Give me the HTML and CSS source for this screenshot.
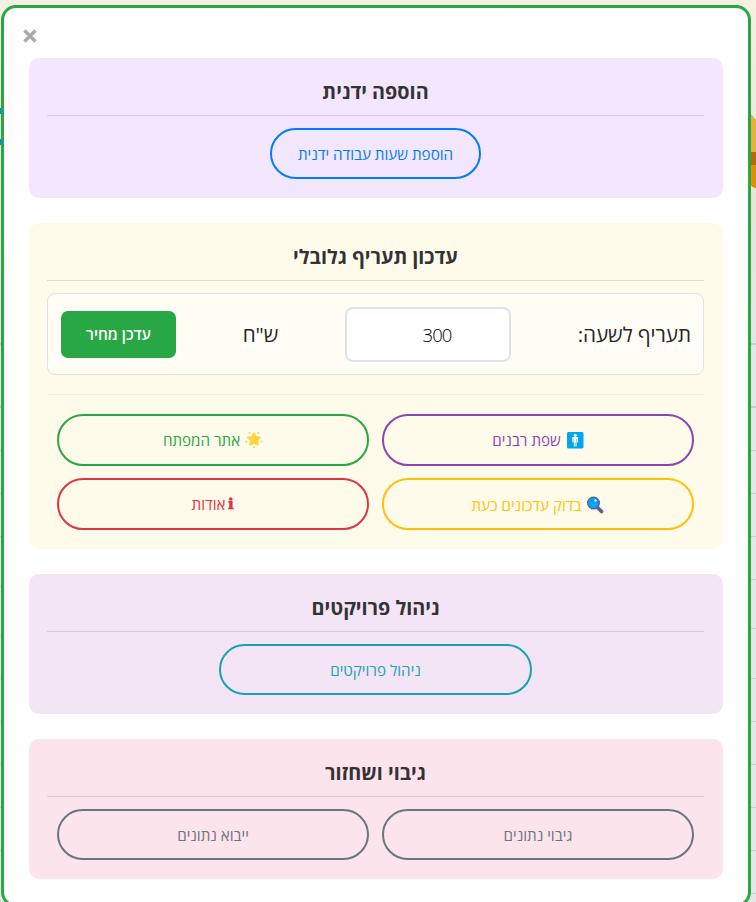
FILE: index.html
```
<!DOCTYPE html>
<html lang="he" dir="rtl">
<head>
    <meta charset="UTF-8">
    <meta name="viewport" content="width=device-width, initial-scale=1.0">
    <title>הגדרות</title>
    <link rel="stylesheet" href="styles.css">
</head>
<body>
    <svg class="backdrop" width="756" height="902" viewBox="0 0 756 902">
        <g fill="#007bff">
            <rect x="0" y="108" width="1" height="6"/>
            <rect x="0" y="139" width="1" height="6"/>
        </g>
        <path d="M750 113l6 7v34l-6-2z" fill="#e8b13c"/>
        <rect x="750" y="152" width="6" height="13" fill="#b96b0b"/>
        <path d="M750 165h6v23q-4 0-6-4z" fill="#df8e08"/>
        <path d="M751 344h5M751 407h5M0 344h1M0 407h1" stroke="#cacaca" stroke-width="2"/>
        <path d="M751 450.500h5M751 493.500h5M751 536.500h5M751 579.500h5M751 628.500h5M751 678.500h5M751 721.500h5M751 764.500h5M751 807.500h5M751 850.500h5M751 893.500h5M0 450.500h1M0 493.500h1M0 536.500h1M0 586.500h1M0 635.500h1M0 678.500h1M0 721.500h1M0 764.500h1M0 807.500h1M0 850.500h1M0 900.500h1" stroke="#cacaca"/>
    </svg>

    <div class="modal-content">
        <button class="close" aria-label="סגור">
            <svg width="14" height="14" viewBox="0 0 14 14"><path d="M1.500 1.500l11 11M12.500 1.500l-11 11" stroke="#aaa" stroke-width="3.400"/></svg>
        </button>

        <section class="section manual">
            <h3>הוספה ידנית</h3>
            <div class="single">
                <button class="btn btn-blue">הוספת שעות עבודה ידנית</button>
            </div>
        </section>

        <section class="section rate">
            <h3>עדכון תעריף גלובלי</h3>
            <div class="rate-box">
                <label for="hourlyRate">תעריף לשעה:</label>
                <input type="text" id="hourlyRate" value="300">
                <span class="currency">ש"ח</span>
                <button class="update-btn">עדכן מחיר</button>
            </div>
            <div class="btn-grid links">
                <button class="btn btn-purple">
                    <svg class="icon" width="18" height="18" viewBox="0 0 18 18">
                        <rect x="1" y="1" width="16.500" height="16.500" rx="1.500" fill="#00a4ef"/>
                        <circle cx="9.200" cy="4.200" r="1.500" fill="#fff"/>
                        <path d="M6.300 6h5.800v5.200H11V7.900h-.4v7.600H9.500v-4h-.6v4H7.800V7.900h-.4v3.300H6.300z" fill="#fff"/>
                    </svg>
                    <span>שפת רבנים</span>
                </button>
                <button class="btn btn-green">
                    <svg class="icon" width="18" height="18" viewBox="0 0 18 18">
                        <path d="M9 2.500l1.800 3.500 4 .5-2.900 2.800.8 4.200L9 11.600l-3.700 1.900.8-4.200-2.900-2.800 4-.5z" fill="#ffd43b" stroke="#ffd43b" stroke-width="2" stroke-linejoin="round"/>
                        <g fill="#ffc83d">
                            <circle cx="4.500" cy="1.800" r=".9"/><circle cx="13.500" cy="1.800" r=".9"/>
                            <circle cx="1.300" cy="10.600" r=".9"/><circle cx="16.700" cy="10.600" r=".9"/>
                            <circle cx="9" cy="16.300" r=".9"/>
                        </g>
                    </svg>
                    <span>אתר המפתח</span>
                </button>
                <button class="btn btn-yellow">
                    <svg class="icon icon-search" width="18" height="18" viewBox="0 0 18 18">
                        <path d="M11.500 11.500l4 4" stroke="#635994" stroke-width="3.600" stroke-linecap="round"/>
                        <circle cx="7.500" cy="7" r="5.900" fill="#00a6ed" stroke="#635994" stroke-width="1.200"/>
                        <circle cx="9.500" cy="4.500" r="1.200" fill="#d3f2ff"/>
                    </svg>
                    <span>בדוק עדכונים כעת</span>
                </button>
                <button class="btn btn-red"><b class="info">ℹ</b><span>אודות</span></button>
            </div>
        </section>

        <section class="section projects">
            <h3>ניהול פרויקטים</h3>
            <div class="single">
                <button class="btn btn-teal">ניהול פרויקטים</button>
            </div>
        </section>

        <section class="section backup">
            <h3>גיבוי ושחזור</h3>
            <div class="btn-grid">
                <button class="btn btn-gray">גיבוי נתונים</button>
                <button class="btn btn-gray">ייבוא נתונים</button>
            </div>
        </section>
    </div>
</body>
</html>
```
FILE: styles.css
```
* {
    box-sizing: border-box;
}

body {
    margin: 0;
    height: 902px;
    overflow: hidden;
    background: linear-gradient(#f5f0e0, #e9e5da 200px, #e6e6e6 350px);
    font-family: "Open Sans", "Noto Sans", sans-serif;
    color: #212529;
}

button,
input {
    font-family: inherit;
}

.backdrop {
    position: absolute;
    top: 0;
    left: 0;
}

.modal-content {
    position: relative;
    width: 750px;
    height: 902px;
    margin: 5px 5px 0 1px;
    padding: 21px 25px 25px;
    background-color: #fff;
    border: 3px solid #28a745;
    border-radius: 15px;
}

.close {
    display: block;
    width: 14px;
    height: 14px;
    margin: 0 auto 15px -6px;
    padding: 0;
    border: none;
    background: none;
    cursor: pointer;
}

.close svg {
    display: block;
}

.section {
    margin-bottom: 25px;
    padding: 18px 19px 19px 18px;
    border-radius: 10px;
}

.manual { background-color: #f3e6ff; }
.rate { background-color: #fffbea; }
.projects { background-color: #f3e5f5; }
.backup { background-color: #fce4ec; }

h3 {
    height: 40px;
    margin: 0 0 12px;
    border-bottom: 1px solid rgba(0, 0, 0, 0.12);
    color: #333;
    font-size: 19.8px;
    font-weight: 700;
    line-height: 31px;
    text-align: center;
    white-space: nowrap;
}

.single {
    display: flex;
    justify-content: center;
}

.btn {
    display: flex;
    align-items: center;
    justify-content: center;
    height: 51px;
    padding: 0 10px;
    border: 2px solid;
    border-radius: 26px;
    background: transparent;
    font-size: 15.2px;
    font-weight: 450;
    white-space: nowrap;
    cursor: pointer;
}

.btn-blue { width: 211px; color: #007bff; }
.btn-teal { width: 313px; color: #17a2b8; }
.btn-purple { color: #8e44ad; }
.btn-green { color: #28a745; }
.btn-yellow { color: #ffc107; }
.btn-red { color: #dc3545; }
.btn-gray { color: #6c757d; }

.rate-box {
    display: flex;
    align-items: center;
    justify-content: space-between;
    height: 82px;
    padding: 0 12px 0 13px;
    border: 1px solid #dee2e6;
    border-radius: 8px;
    background-color: #fffdf6;
    font-size: 20.6px;
}

.rate-box input {
    width: 166px;
    height: 55px;
    padding: 0 0 0 18px;
    border: 2px solid #dee2e6;
    border-radius: 8px;
    background-color: #fff;
    font-size: 18.5px;
    font-weight: 300;
    letter-spacing: -0.9px;
    text-align: center;
    direction: ltr;
}

.update-btn {
    width: 115px;
    height: 47px;
    padding: 0;
    border: none;
    border-radius: 7px;
    background-color: #28a745;
    color: #fff;
    font-size: 15.3px;
    font-weight: 600;
    cursor: pointer;
}

.btn-grid {
    display: grid;
    grid-template-columns: 312px 312px;
    gap: 12px 13px;
    padding: 0 10px;
}

.links {
    margin-top: 19px;
    padding-top: 19px;
    border-top: 1px solid #eee;
}

.links .btn {
    height: 52px;
}

.btn-yellow {
    padding-top: 2px;
}

.icon {
    margin-left: 5px;
}

.info {
    margin-left: 3px;
    font-family: "DejaVu Serif", serif;
    font-size: 15px;
}
```
